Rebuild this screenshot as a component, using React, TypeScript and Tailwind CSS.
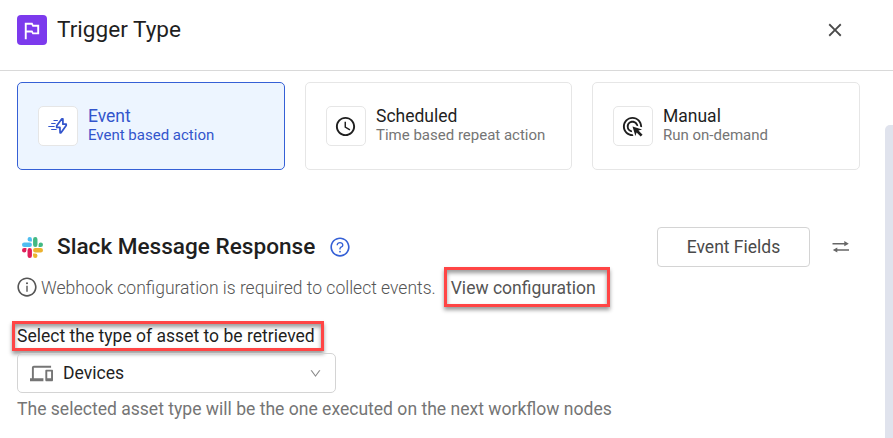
import React from "react";
import {
  MdAdsClick,
  MdClose,
  MdOutlinedFlag,
  MdSchedule,
  MdDevices,
} from "react-icons/md";
import {
  AiOutlineDown,
  AiOutlineInfoCircle,
  AiOutlineQuestionCircle,
} from "react-icons/ai";

function BoltIcon() {
  return (
    <svg width="20" height="18" viewBox="0 0 20 18" fill="none" stroke="currentColor" className="ml-px">
      <path d="M13.7 1.9L8.7 8.8V10.4H11.9L12.1 15.8H13L18.2 8.6V7.2H14.9V1.9Z" strokeWidth="1.75" strokeLinejoin="round" />
      <path d="M5.5 3.5H9.8M3.2 6.5H7.6M0.3 9.5H6.6M3.2 12.5H8.6" strokeWidth="1.1" />
    </svg>
  );
}

function SlackLogo() {
  return (
    <svg width="21" height="21" viewBox="0 0 122.8 122.8">
      <path d="M25.8 77.6a12.9 12.9 0 1 1-12.9-12.9h12.9zm6.5 0a12.9 12.9 0 0 1 25.8 0v32.3a12.9 12.9 0 0 1-25.8 0z" fill="#e01e5a" />
      <path d="M45.2 25.8a12.9 12.9 0 1 1 12.9-12.9v12.9zm0 6.5a12.9 12.9 0 0 1 0 25.8H12.9a12.9 12.9 0 0 1 0-25.8z" fill="#4fbdf0" />
      <path d="M97 45.2a12.9 12.9 0 1 1 12.9 12.9H97zm-6.5 0a12.9 12.9 0 0 1-25.8 0V12.9a12.9 12.9 0 0 1 25.8 0z" fill="#42b983" />
      <path d="M77.6 97a12.9 12.9 0 1 1-12.9 12.9V97zm0-6.5a12.9 12.9 0 0 1 0-25.8h32.3a12.9 12.9 0 0 1 0 25.8z" fill="#ecb22e" />
    </svg>
  );
}

function SwapIcon() {
  return (
    <svg width="18" height="14" viewBox="0 0 18 14" className="text-[#666]">
      <path d="M0.5 3.7H13M5 10H17" stroke="currentColor" strokeWidth="1.4" fill="none" />
      <path d="M12.3 1.1L16.8 3.7L12.3 6.3ZM5.3 7.4L0.8 10L5.3 12.6Z" fill="currentColor" />
    </svg>
  );
}

type CardProps = {
  title: string;
  text: string;
  icon: React.ReactNode;
  active?: boolean;
};

function TriggerCard({ title, text, icon, active }: CardProps) {
  return (
    <div
      className={`flex h-[88px] items-center rounded-[5px] border pl-5 ${
        active ? "border-[#3560d6] bg-[#edf5ff] text-[#3355cc]" : "border-[#e6e6e6] bg-white text-[#1f1f1f]"
      }`}
    >
      <div className="flex size-10 items-center justify-center rounded-[5px] border border-[#e6e6e6] bg-white pr-px">
        {icon}
      </div>
      <div className="ml-[10px] flex flex-col pb-0.5">
        <span className="text-[17.5px] leading-5">{title}</span>
        <span className={`text-[15px] leading-[18px] ${active ? "" : "text-[#757575]"}`}>{text}</span>
      </div>
    </div>
  );
}

export default function App() {
  return (
    <div className="flex h-[438px] w-[893px] flex-col overflow-hidden bg-white font-[Roboto,sans-serif] text-[#1f1f1f]">
      <header className="flex h-[71px] shrink-0 items-start border-b border-[#d9d9d9] pt-[15px] pr-[47px] pl-[17px]">
        <div className="flex size-[30px] items-center justify-center rounded-[4px] bg-[#7c3aed] pr-px text-white">
          <MdOutlinedFlag size={23} />
        </div>
        <h1 className="ml-[10px] text-[22.6px] leading-[30px]">Trigger Type</h1>
        <MdClose size={22} className="mt-1 ml-auto text-[#4a4a4a]" />
      </header>

      <div className="flex flex-1 justify-between">
        <main className="w-[860px] pt-[11px] pl-[17px]">
          <div className="grid grid-cols-[268px_267px_268px] gap-5">
            <TriggerCard active title="Event" text="Event based action" icon={<BoltIcon />} />
            <TriggerCard title="Scheduled" text="Time based repeat action" icon={<MdSchedule size={23} />} />
            <TriggerCard title="Manual" text="Run on-demand" icon={<MdAdsClick size={23} />} />
          </div>

          <div className="mt-[57px] flex h-10 items-center">
            <div className="ml-[5px]">
              <SlackLogo />
            </div>
            <h2 className="ml-[14px] text-[22.58px] leading-8 font-medium">Slack Message Response</h2>
            <AiOutlineQuestionCircle size={22} className="ml-[14px] text-[#3560d6]" />
            <button className="ml-auto h-10 w-[153px] rounded-[4px] border border-[#d4d4d4] text-[17.5px] text-[#4a4a4a]">
              Event Fields
            </button>
            <div className="mr-[10px] ml-[22px]">
              <SwapIcon />
            </div>
          </div>

          <div className="flex h-10 items-center text-[17.53px] text-[#555]">
            <AiOutlineInfoCircle size={22} className="-ml-px shrink-0" />
            <span className="ml-[3px] pt-[2px] font-light">Webhook configuration is required to collect events.</span>
            <a className="ml-2 flex h-10 w-[166px] items-center border-[3px] border-[#ff4545] pt-[2px] pl-1 shadow-[0_3px_4px_#0006,inset_0_3px_4px_#0006]">
              View configuration
            </a>
          </div>

          <div className="mt-[14px] -ml-[5px] flex h-[30px] w-[312px] items-center border-[3px] border-[#ff4545] pl-[2px] shadow-[0_3px_4px_#0006,inset_0_3px_4px_#0006]">
            <span className="text-[17.55px] leading-6 whitespace-nowrap">Select the type of asset to be retrieved</span>
          </div>
          <div className="mt-[2px] flex h-10 w-[319px] items-center rounded-[5px] border border-[#d4d4d4] pr-[13px] pl-[12px]">
            <MdDevices size={23} className="text-[#757575]" />
            <span className="ml-[10px] text-[17.6px] leading-6">Devices</span>
            <AiOutlineDown size={13} className="ml-auto text-[#8a8a8a]" />
          </div>
          <p className="mt-1 text-[17.56px] leading-6 text-[#757575]">
            The selected asset type will be the one executed on the next workflow nodes
          </p>
        </main>
        <div className="mt-[54px] w-2 rounded-tl-[5px] bg-[#e0e3ed]" />
      </div>
    </div>
  );
}
